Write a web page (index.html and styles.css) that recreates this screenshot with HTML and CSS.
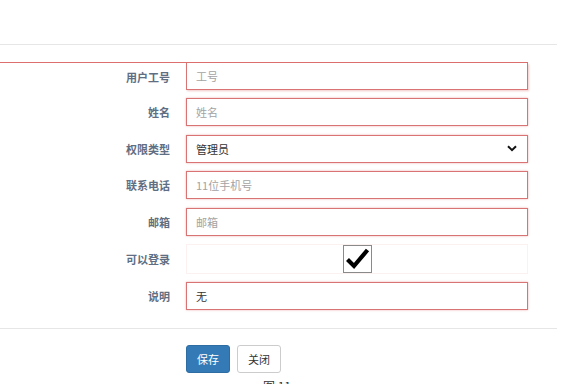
FILE: index.html
```html
<!DOCTYPE html>
<html>
<head>
<meta charset="utf-8">
<link rel="stylesheet" href="styles.css">
</head>
<body>
<div class="page">
  <div class="header"></div>
  <div class="sep"></div>
  <div class="form">
    <div class="err-line"></div>
    <div class="row first">
      <label class="lbl">用户工号</label>
      <div class="field"><input class="inp no-top" placeholder="工号"></div>
    </div>
    <div class="row">
      <label class="lbl">姓名</label>
      <div class="field"><input class="inp" placeholder="姓名"></div>
    </div>
    <div class="row">
      <label class="lbl">权限类型</label>
      <div class="field">
        <div class="inp select">
          <span class="val">管理员</span>
          <svg class="chev" width="10" height="7" viewBox="0 0 10 7"><path d="M1 1.2 L5 5.2 L9 1.2" fill="none" stroke="#111" stroke-width="2"/></svg>
        </div>
      </div>
    </div>
    <div class="row">
      <label class="lbl">联系电话</label>
      <div class="field"><input class="inp" placeholder="11位手机号"></div>
    </div>
    <div class="row">
      <label class="lbl">邮箱</label>
      <div class="field"><input class="inp" placeholder="邮箱"></div>
    </div>
    <div class="row check-row">
      <label class="lbl">可以登录</label>
      <div class="field">
        <div class="check-wrap">
          <svg class="check" width="29" height="28" viewBox="0 0 29 28">
            <rect x="0.5" y="0.5" width="28" height="27" fill="#fff" stroke="#8a8a8a"/>
            <path d="M4.5 14.5 L11 21 L24.5 5" fill="none" stroke="#000" stroke-width="4.2" stroke-linejoin="miter"/>
          </svg>
        </div>
      </div>
    </div>
    <div class="row">
      <label class="lbl">说明</label>
      <div class="field"><input class="inp val-inp" value="无"></div>
    </div>
  </div>
  <div class="sep sep2"></div>
  <div class="actions">
    <button class="btn primary">保存</button>
    <button class="btn">关闭</button>
  </div>
  <div class="caption">图 11</div>
</div>
</body>
</html>
```
FILE: styles.css
```css
html, body {
  margin: 0;
  padding: 0;
  background: #fff;
  overflow: hidden;
}
body {
  font-family: "Noto Sans CJK SC", "Liberation Sans", sans-serif;
  font-size: 11px;
  color: #333;
}
.page {
  width: 588px;
  height: 384px;
  position: relative;
}
.header {
  height: 44px;
}
.sep {
  width: 557px;
  height: 1px;
  background: #e6e6e6;
}
.form {
  padding-top: 17px;
  display: flex;
  flex-direction: column;
}
.err-line {
  width: 528px;
  height: 1px;
  background: #dd6f6f;
}
.row {
  display: flex;
  align-items: center;
  height: 28px;
  margin-bottom: 8.4px;
}
.row.first {
  height: 27px;
}
.check-row {
  height: 30px;
}
.lbl {
  width: 170px;
  text-align: right;
  font-weight: bold;
  color: #5f6e82;
  font-size: 11px;
  flex: none;
}
.field {
  margin-left: 16px;
  width: 342px;
  height: 100%;
}
.inp {
  box-sizing: border-box;
  width: 342px;
  height: 100%;
  border: 1px solid #d97474;
  box-shadow: 0 0 2px rgba(220, 110, 110, 0.55);
  padding: 0 9px;
  font-family: "Noto Sans CJK SC", "Liberation Sans", sans-serif;
  font-size: 11px;
  color: #333;
  outline: none;
  background: #fff;
  display: block;
}
.inp::placeholder {
  color: #a3a3a3;
}
.no-top {
  border-top: none;
  box-shadow: 1px 1px 2px rgba(220, 110, 110, 0.4);
}
.select {
  display: flex;
  align-items: center;
  justify-content: space-between;
  padding-right: 10px;
}
.chev {
  display: block;
}
.check-wrap {
  box-sizing: border-box;
  height: 100%;
  width: 342px;
  border: 1px solid #fbf1f1;
  display: flex;
  justify-content: center;
  align-items: center;
}
.check {
  display: block;
}
.sep2 {
  margin-top: 9px;
}
.actions {
  display: flex;
  gap: 7px;
  padding-left: 186px;
  padding-top: 16px;
}
.btn {
  box-sizing: border-box;
  height: 28px;
  padding: 0 10px;
  font-family: "Noto Sans CJK SC", "Liberation Sans", sans-serif;
  font-size: 11px;
  border: 1px solid #ccc;
  background: #fff;
  color: #333;
  border-radius: 3px;
  width: 44px;
}
.btn.primary {
  background: #337ab7;
  border-color: #2e6da4;
  color: #fff;
}
.caption {
  position: absolute;
  left: 263px;
  top: 377px;
  font-family: "Noto Sans CJK SC", sans-serif;
  font-size: 12px;
  color: #333;
}
```
